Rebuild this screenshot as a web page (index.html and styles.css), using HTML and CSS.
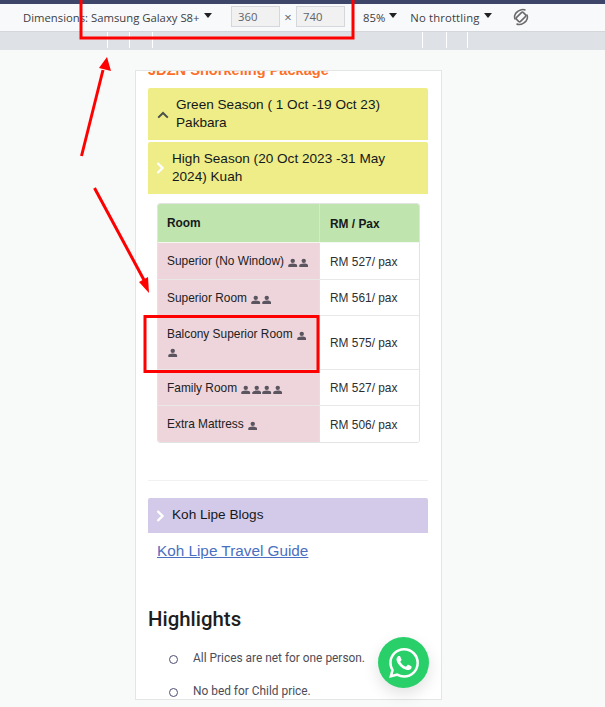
FILE: index.html
```html
<!DOCTYPE html>
<html lang="en">
<head>
<meta charset="utf-8">
<title>Koh Lipe Package</title>
<link rel="stylesheet" href="styles.css">
</head>
<body>
<svg class="defs" width="0" height="0" aria-hidden="true">
  <symbol id="person" viewBox="0 0 10 10">
    <circle cx="5" cy="3" r="2.3" fill="#5b5560"/>
    <path d="M0.3 9.7V8C0.3 6.6 2.8 5.9 5 5.9S9.7 6.6 9.7 8V9.7Z" fill="#5b5560"/>
  </symbol>
  <symbol id="chev-right" viewBox="0 0 10 14">
    <path d="M2.5 2L7.5 7L2.5 12" fill="none" stroke="currentColor" stroke-width="2.4"/>
  </symbol>
</svg>
<div class="topline"></div>
<header class="toolbar">
  <span class="device">Dimensions: Samsung Galaxy S8+</span><span class="caret"></span>
  <span class="size-input first">360</span><span class="times">×</span><span class="size-input">740</span>
  <span class="zoom-level">85%</span><span class="caret"></span>
  <span class="throttle">No throttling</span><span class="caret"></span>
  <svg class="rotate" width="18" height="18" viewBox="0 0 18 18" fill="none" stroke="#6b6b6b" stroke-width="1.6">
    <path d="M3.5 11.5C1.5 9 3 5 6 3.2C8.5 1.6 11.5 1 13.5 2.2"/>
    <path d="M14.5 6.5C16.5 9 15 13 12 14.8C9.5 16.4 6.5 17 4.5 15.8"/>
    <rect x="6.2" y="4.2" width="5.6" height="9.6" rx="1.4" transform="rotate(45 9 9)"/>
  </svg>
</header>
<div class="ruler">
  <i></i><i></i><i></i><i></i><i></i><i></i><i></i>
</div>
<main class="page">
  <article class="card">
    <h2 class="package-title">JDZN Snorkeling Package</h2>
    <div class="acc acc-yellow acc-open">
      <svg class="acc-up" width="12" height="8" viewBox="0 0 12 8"><path d="M1.2 6.6L6 2L10.8 6.6" fill="none" stroke="#4a4f4a" stroke-width="2"/></svg>
      <span>Green Season ( 1 Oct -19 Oct 23) Pakbara</span>
    </div>
    <div class="acc acc-yellow acc-high">
      <svg class="acc-chev" width="10" height="14"><use href="#chev-right"/></svg>
      <span>High Season (20 Oct 2023 -31 May 2024) Kuah</span>
    </div>
    <div class="rates">
      <div class="row head"><div class="room">Room</div><div class="price">RM / Pax</div></div>
      <div class="row r1">
        <div class="room">Superior (No Window) <span class="people"><svg><use href="#person"/></svg><svg><use href="#person"/></svg></span></div>
        <div class="price">RM 527/ pax</div>
      </div>
      <div class="row r2">
        <div class="room">Superior Room <span class="people"><svg><use href="#person"/></svg><svg><use href="#person"/></svg></span></div>
        <div class="price">RM 561/ pax</div>
      </div>
      <div class="row r3">
        <div class="room">Balcony Superior Room <span class="people"><svg><use href="#person"/></svg></span> <span class="people"><svg><use href="#person"/></svg></span></div>
        <div class="price">RM 575/ pax</div>
      </div>
      <div class="row r4">
        <div class="room">Family Room <span class="people"><svg><use href="#person"/></svg><svg><use href="#person"/></svg><svg><use href="#person"/></svg><svg><use href="#person"/></svg></span></div>
        <div class="price">RM 527/ pax</div>
      </div>
      <div class="row r5">
        <div class="room">Extra Mattress <span class="people"><svg><use href="#person"/></svg></span></div>
        <div class="price">RM 506/ pax</div>
      </div>
    </div>
    <hr class="divider">
    <div class="acc acc-purple">
      <svg class="acc-chev" width="10" height="14"><use href="#chev-right"/></svg>
      <span>Koh Lipe Blogs</span>
    </div>
    <p class="guide"><a href="#guide">Koh Lipe Travel Guide</a></p>
    <h3 class="highlights">Highlights</h3>
    <ul class="notes">
      <li>All Prices are net for one person.</li>
      <li>No bed for Child price.</li>
    </ul>
  </article>
</main>
<a class="whatsapp" href="#chat" aria-label="WhatsApp">
  <svg width="30" height="30" viewBox="0 0 24 24" fill="#fff"><path d="M17.472 14.382c-.297-.149-1.758-.867-2.03-.967-.273-.099-.471-.148-.67.15-.197.297-.767.966-.94 1.164-.173.199-.347.223-.644.075-.297-.15-1.255-.463-2.39-1.475-.883-.788-1.48-1.761-1.653-2.059-.173-.297-.018-.458.13-.606.134-.133.298-.347.446-.52.149-.174.198-.298.298-.497.099-.198.05-.371-.025-.52-.075-.149-.669-1.612-.916-2.207-.242-.579-.487-.5-.669-.51-.173-.008-.371-.01-.57-.01-.198 0-.52.074-.792.372-.272.297-1.04 1.016-1.04 2.479 0 1.462 1.065 2.875 1.213 3.074.149.198 2.096 3.2 5.077 4.487.709.306 1.262.489 1.694.625.712.227 1.36.195 1.871.118.571-.085 1.758-.719 2.006-1.413.248-.694.248-1.289.173-1.413-.074-.124-.272-.198-.57-.347m-5.421 7.403h-.004a9.87 9.87 0 01-5.031-1.378l-.361-.214-3.741.982.998-3.648-.235-.374a9.86 9.86 0 01-1.51-5.26c.001-5.45 4.436-9.884 9.888-9.884 2.64 0 5.122 1.03 6.988 2.898a9.825 9.825 0 012.893 6.994c-.003 5.45-4.437 9.884-9.885 9.884m8.413-18.297A11.815 11.815 0 0012.05 0C5.495 0 .16 5.335.157 11.892c0 2.096.547 4.142 1.588 5.945L.057 24l6.305-1.654a11.882 11.882 0 005.683 1.448h.005c6.554 0 11.89-5.335 11.893-11.893a11.821 11.821 0 00-3.48-8.413z"/></svg>
</a>
<svg class="annotations" width="605" height="707" viewBox="0 0 605 707" fill="none" stroke="#fe0000">
  <rect x="81" y="-4" width="272" height="42" stroke-width="3"/>
  <rect x="145" y="316.5" width="173" height="55" stroke-width="3"/>
  <path d="M81.5 156L103 70" stroke-width="3"/>
  <path d="M107 57L111 71L99 68Z" fill="#fe0000" stroke="none"/>
  <path d="M94.5 188L144 280" stroke-width="3"/>
  <path d="M149 293L139 282L148 277Z" fill="#fe0000" stroke="none"/>
</svg>
</body>
</html>
```
FILE: styles.css
```css
* { box-sizing: border-box; }
html, body { margin: 0; padding: 0; }
body {
  width: 605px;
  height: 707px;
  overflow: hidden;
  position: relative;
  display: flex;
  flex-direction: column;
  background: #f8faf9;
  font-family: "Liberation Sans", Arial, sans-serif;
  color: #202124;
}
.defs { position: absolute; }
.topline { height: 4px; background: #3d4668; flex: none; }
.toolbar {
  flex: none;
  height: 26px;
  display: flex;
  align-items: center;
  padding-left: 23px;
  background: #f8f9fa;
  font-family: "Open Sans", sans-serif;
  font-size: 11.3px;
  color: #3c4043;
}
.device { width: 177px; white-space: nowrap; }
.caret {
  width: 0;
  height: 0;
  margin-left: 4px;
  margin-top: -4px;
  border-left: 4px solid transparent;
  border-right: 4px solid transparent;
  border-top: 5px solid #202124;
}
.size-input {
  width: 49px;
  height: 21px;
  margin-top: -1px;
  padding: 2px 6px;
  line-height: 16px;
  background: #f1f1f1;
  border: 1px solid #d5d7da;
  color: #5f6368;
}
.size-input.first { margin-left: 19px; }
.times { width: 16px; text-align: center; color: #5f6368; font-size: 13px; }
.zoom-level { margin-left: 18px; }
.throttle { margin-left: 13px; letter-spacing: .15px; }
.rotate { margin-left: 20px; }
.ruler {
  flex: none;
  height: 18px;
  margin-top: 2px;
  background: #dee1e6;
  display: grid;
  grid-template-columns: 108px 22px 23px 270px 24px 21px 137px;
  box-shadow: 0 -1px 0 #d3d6da;
}
.ruler i { border-right: 1px solid #fff; height: 16px; }
.ruler i:last-child { border-right: 0; }
.page {
  flex: 1;
  min-height: 0;
  padding: 20px 0 7px 135px;
  display: flex;
}
.card {
  width: 307px;
  height: 630px;
  padding: 0 13px 0 12px;
  background: #fff;
  border: 1px solid #e4e6e6;
  overflow: hidden;
}
.package-title {
  margin: -10px 0 9px;
  font-size: 14.6px;
  line-height: 18px;
  font-weight: 700;
  color: #fd6f28;
  white-space: nowrap;
}
.acc {
  position: relative;
  display: flex;
  align-items: center;
  border-radius: 2px 2px 0 0;
  font-size: 13.6px;
  line-height: 18px;
  color: #14181c;
}
.acc-yellow { background: #eeed87; }
.acc-purple { background: #d3cae9; height: 35px; padding-left: 24px; margin-bottom: 9px; }
.acc-open { height: 52px; padding: 0 30px 0 28px; margin-bottom: 2px; }
.acc-high { height: 52px; padding: 0 30px 0 24px; }
.acc-purple span { margin-top: -2px; }
.acc-up { position: absolute; left: 9px; top: 23px; }
.acc-chev { position: absolute; left: 7px; top: 50%; margin-top: -7px; color: #fff; }
.rates {
  margin: 9px 8px 0 9px;
  border: 1px solid #e2e3e3;
  border-radius: 3px;
  overflow: hidden;
  font-size: 11.9px;
  line-height: 17px;
}
.row { display: grid; grid-template-columns: 162px 1fr; border-bottom: 1px solid #e8e8e8; }
.row:last-child { border-bottom: 0; }
.price { display: flex; flex-wrap: wrap; align-items: center; padding: 2px 8px 0 10px; background: #fff; color: #2b2f33; }
.room { display: block; padding: 10px 3px 0 9px; background: #edd5db; border-right: 1px solid #e5dde0; }
.head { height: 39px; border-bottom-color: #f4f8f2; }
.head .room, .head .price { background: #bfe4ae; font-weight: 700; color: #16191a; }
.head .room { padding-top: 11px; border-right-color: #d2ecc8; }
.r1 { height: 37px; }
.r2, .r4, .r5 { height: 36px; }
.r3 { height: 54px; }
.people { display: inline-flex; gap: 1px; vertical-align: -2px; margin-left: 1px; }
.people svg { width: 9.5px; height: 9.5px; }
.divider { border: 0; border-top: 1px solid #f0f1f1; margin: 37px 0 17px; }
.guide { margin: 0; padding-left: 9px; font-size: 15.3px; line-height: 18px; }
.guide a { color: #4a6fc0; }
.highlights {
  margin: 46px 0 18px;
  font-family: Roboto, sans-serif;
  font-size: 20.4px;
  line-height: 26px;
  font-weight: 500;
  color: #1c1e21;
}
.notes {
  margin: 0;
  padding: 0 0 0 45px;
  list-style: none;
  font-family: Roboto, sans-serif;
  font-size: 11.9px;
  line-height: 16px;
  color: #4d4d58;
}
.notes li { position: relative; margin-bottom: 17px; white-space: nowrap; }
.notes li::before {
  content: "";
  position: absolute;
  left: -24px;
  top: 5px;
  width: 7px;
  height: 7px;
  border: 1px solid #4d4f73;
  border-radius: 50%;
}
.whatsapp {
  position: absolute;
  left: 378px;
  top: 637px;
  width: 51px;
  height: 51px;
  border-radius: 50%;
  background: #29d06a;
  box-shadow: 0 6px 16px rgba(0, 0, 0, .12);
  display: flex;
  align-items: center;
  justify-content: center;
}
.annotations { position: absolute; left: 0; top: 0; pointer-events: none; }
```
